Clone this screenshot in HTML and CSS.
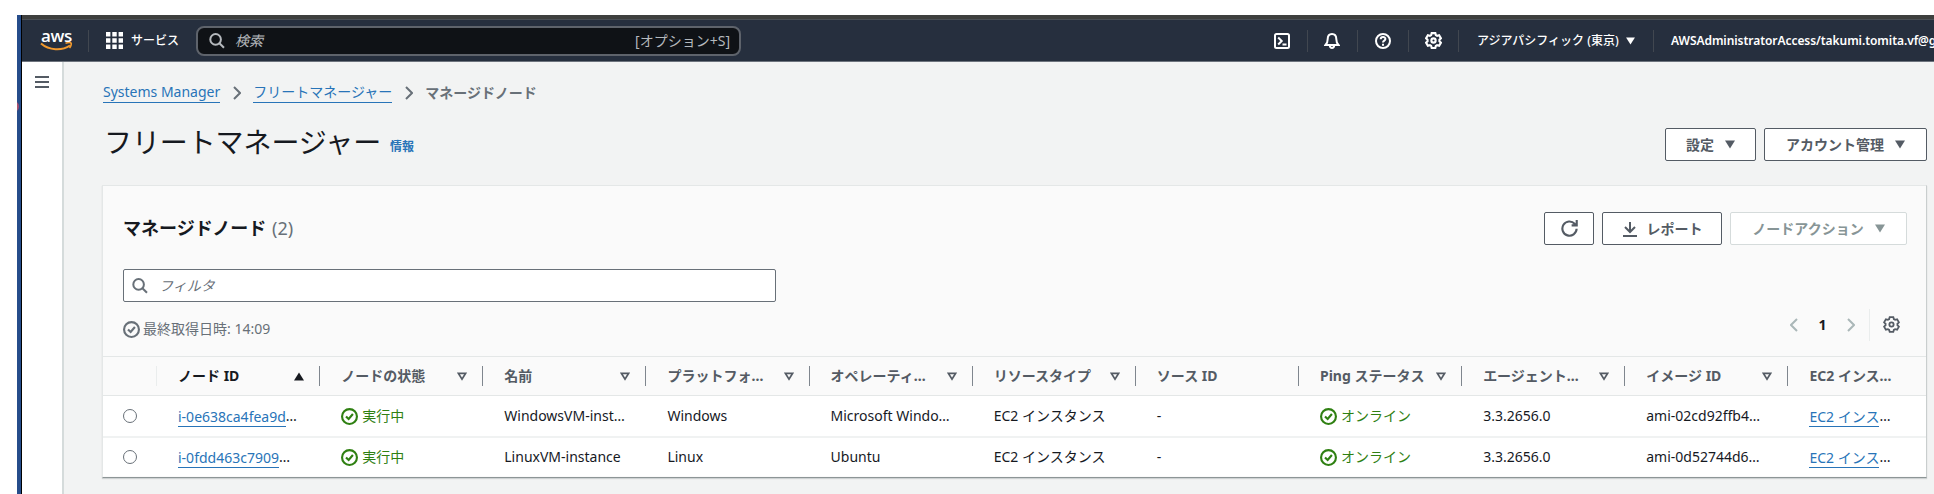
FILE: index.html
```html
<!DOCTYPE html>
<html lang="ja">
<head>
<meta charset="utf-8">
<title>フリートマネージャー</title>
<link rel="stylesheet" href="styles.css">
</head>
<body>
<svg class="defs" width="0" height="0">
  <symbol id="search" viewBox="0 0 16 16"><circle cx="6.6" cy="6.4" r="5.3"/><path d="M10.4 10.2 15 14.8"/></symbol>
  <symbol id="gear" viewBox="0 0 16 16"><path d="M6.3 1h3.4l.5 1.9 1.2.7 1.9-.5 1.7 2.9L13.6 7.300v1.400L15 10l-1.700 2.900-1.900-.5-1.200.7L9.700 15H6.300l-.5-1.900-1.200-.7-1.900.5L1 10l1.400-1.300V7.300L1 6l1.700-2.900 1.900.5 1.200-.7z"/><circle cx="8" cy="8" r="2"/></symbol>
  <symbol id="check" viewBox="0 0 16 16"><circle cx="8" cy="8" r="7"/><path d="m4.700 7.900 2.500 2.500 4-4.700"/></symbol>
  <symbol id="chev" viewBox="0 0 8 14"><path d="m1 1 6 6-6 6"/></symbol>
  <symbol id="down" viewBox="0 0 10 9"><path class="solid" d="M0 .5h10L5 8.500z"/></symbol>
  <symbol id="sort" viewBox="0 0 10 9"><path d="M1.300 1.300h7.400L5 7.200z"/></symbol>
</svg>
<div class="window">
  <div class="edge"><i class="dot"></i></div>
  <div class="app">
    <div class="strip"></div>
    <header class="nav">
      <div class="logo"><span>aws</span><svg width="33" height="10" viewBox="0 0 33 10"><path d="M1 1.500C9 8.500 22 9 30 3.500" stroke="#f29a2e" stroke-width="2" fill="none"/><path d="M25.500 1.300c2.500-.8 5-.8 5.600-.2.500.7-.2 3.300-1.600 5" stroke="#f29a2e" stroke-width="1.600" fill="none"/></svg></div>
      <i class="bar bar-logo"></i>
      <svg class="apps" width="17" height="17" viewBox="0 0 17 17"><path d="M0 0h4.400v4.400H0zM6.300 0h4.400v4.400H6.300zM12.600 0H17v4.400h-4.400zM0 6.300h4.400v4.400H0zM6.300 6.300h4.400v4.400H6.300zM12.600 6.300H17v4.400h-4.400zM0 12.600h4.400V17H0zM6.300 12.600h4.400V17H6.300zM12.600 12.600H17V17h-4.400z"/></svg>
      <span class="services">サービス</span>
      <div class="search"><svg class="ic" width="16" height="16"><use href="#search"/></svg><em>検索</em><span class="key">[オプション+S]</span></div>
      <div class="tools">
        <span class="tool"><svg class="ic" width="16" height="16" viewBox="0 0 16 16"><rect x="1" y="1" width="14" height="14" rx="1.500"/><path d="m4.200 4.500 3.500 3.500-3.500 3.500M8.500 11.500h4"/></svg></span>
        <span class="tool"><svg class="ic" width="16" height="16" viewBox="0 0 16 16"><path d="M1.500 12h13c-1.800-1.700-2.200-3-2.200-6C12.300 3 10.500 1 8 1S3.700 3 3.700 6c0 3-.4 4.300-2.200 6zM5.800 12.500c.2 3.200 4.200 3.200 4.400 0"/></svg></span>
        <span class="tool"><svg class="ic" width="16" height="16" viewBox="0 0 16 16"><circle cx="8" cy="8" r="7"/><path d="M5.700 6.300c0-3 4.700-3 4.700-.2C10.400 7.700 8 7.600 8 9.600M8 10.800v1.900"/></svg></span>
        <span class="tool"><svg class="ic" width="17" height="17"><use href="#gear"/></svg></span>
      </div>
      <span class="region">アジアパシフィック (東京)</span><svg class="caret" width="9" height="8"><use href="#down"/></svg>
      <i class="bar bar-user"></i>
      <span class="user">AWSAdministratorAccess/takumi.tomita.vf@gm</span>
    </header>
    <div class="body">
      <aside class="side"><i></i><i></i><i></i></aside>
      <main class="main">
        <nav class="crumbs"><a class="c1">Systems Manager</a><svg width="8" height="14"><use href="#chev"/></svg><a class="c2">フリートマネージャー</a><svg width="8" height="14"><use href="#chev"/></svg><b>マネージドノード</b></nav>
        <div class="heading">
          <h1>フリートマネージャー</h1><a>情報</a>
          <div class="actions">
            <button class="btn w-set">設定<svg width="10" height="9"><use href="#down"/></svg></button>
            <button class="btn w-acc">アカウント管理<svg width="10" height="9"><use href="#down"/></svg></button>
          </div>
        </div>
        <section class="card">
          <div class="top">
            <h2>マネージドノード</h2><span class="count">(2)</span>
            <div class="actions">
              <button class="btn w-ref"><svg class="ic" width="17" height="17" viewBox="0 0 16 16"><path d="M14.700 8.300A6.700 6.700 0 1 1 12.900 3.500l1.200 1.200M14.800 0v5H10"/></svg></button>
              <button class="btn w-rep"><svg class="ic" width="16" height="16" viewBox="0 0 16 16"><path d="M8 1v9.500M3 6l5 5 5-5M1 15h14"/></svg>レポート</button>
              <button class="btn w-act off">ノードアクション<svg width="10" height="9"><use href="#down"/></svg></button>
            </div>
          </div>
          <div class="filter"><svg class="ic" width="16" height="16"><use href="#search"/></svg><em>フィルタ</em></div>
          <div class="meta">
            <svg class="ic" width="17" height="17"><use href="#check"/></svg><span class="time">最終取得日時: 14:09</span>
            <div class="pager"><svg class="flip" width="8" height="14"><use href="#chev"/></svg><b>1</b><svg width="8" height="14"><use href="#chev"/></svg><i></i><svg class="ic gear" width="17" height="17"><use href="#gear"/></svg></div>
          </div>
          <div class="row head">
            <div class="pick"></div>
            <div class="cell active"><span>ノード ID</span><svg width="10" height="9"><path class="solid" d="M0 8.500h10L5 .5z"/></svg></div>
            <div class="cell"><span>ノードの状態</span><svg width="10" height="9"><use href="#sort"/></svg></div>
            <div class="cell"><span>名前</span><svg width="10" height="9"><use href="#sort"/></svg></div>
            <div class="cell"><span>プラットフォ…</span><svg width="10" height="9"><use href="#sort"/></svg></div>
            <div class="cell"><span>オペレーティ…</span><svg width="10" height="9"><use href="#sort"/></svg></div>
            <div class="cell"><span>リソースタイプ</span><svg width="10" height="9"><use href="#sort"/></svg></div>
            <div class="cell"><span>ソース ID</span></div>
            <div class="cell"><span>Ping ステータス</span><svg width="10" height="9"><use href="#sort"/></svg></div>
            <div class="cell"><span>エージェント…</span><svg width="10" height="9"><use href="#sort"/></svg></div>
            <div class="cell"><span>イメージ ID</span><svg width="10" height="9"><use href="#sort"/></svg></div>
            <div class="cell last"><span>EC2 インス…</span></div>
          </div>
          <div class="row">
            <div class="pick"><i></i></div>
            <div class="cell"><a>i-0e638ca4fea9d</a>…</div>
            <div class="cell ok"><svg class="ic" width="17" height="17"><use href="#check"/></svg>実行中</div>
            <div class="cell">WindowsVM-inst…</div>
            <div class="cell">Windows</div>
            <div class="cell">Microsoft Windo…</div>
            <div class="cell">EC2 インスタンス</div>
            <div class="cell">-</div>
            <div class="cell ok"><svg class="ic" width="17" height="17"><use href="#check"/></svg>オンライン</div>
            <div class="cell">3.3.2656.0</div>
            <div class="cell">ami-02cd92ffb4…</div>
            <div class="cell last"><a>EC2 インス</a>…</div>
          </div>
          <div class="row">
            <div class="pick"><i></i></div>
            <div class="cell"><a>i-0fdd463c7909</a>…</div>
            <div class="cell ok"><svg class="ic" width="17" height="17"><use href="#check"/></svg>実行中</div>
            <div class="cell">LinuxVM-instance</div>
            <div class="cell">Linux</div>
            <div class="cell">Ubuntu</div>
            <div class="cell">EC2 インスタンス</div>
            <div class="cell">-</div>
            <div class="cell ok"><svg class="ic" width="17" height="17"><use href="#check"/></svg>オンライン</div>
            <div class="cell">3.3.2656.0</div>
            <div class="cell">ami-0d52744d6…</div>
            <div class="cell last"><a>EC2 インス</a>…</div>
          </div>
        </section>
      </main>
    </div>
  </div>
</div>
</body>
</html>
```
FILE: styles.css
```css
* { box-sizing: border-box; }
html, body { margin: 0; height: 494px; overflow: hidden; background: #fff; }
body { font: 14px/20px "Noto Sans", "Noto Sans CJK JP", sans-serif; color: #16191f; white-space: nowrap; }
.defs { position: absolute; }
svg { flex: none; fill: none; stroke: currentColor; stroke-width: 2; display: block; }
svg .solid { fill: currentColor; stroke: none; }
i { flex: none; }

.window { display: flex; height: 494px; padding: 15px 0 0 17px; }
.edge { flex: none; width: 5px; background: #264d8b; border-right: 1px solid #000; overflow: hidden; padding-top: 86px; }
.dot { display: block; width: 11px; height: 11px; margin-left: -9px; border-radius: 50%; background: #a8506f; }
.app { flex: 1; min-width: 0; display: flex; flex-direction: column; }
.strip { height: 5px; background: #3e3f3e; border-bottom: 1px solid #4a4f55; }

.nav { height: 42px; flex: none; background: #262f3e; border-bottom: 1px solid #6d737d; color: #fff; display: flex; align-items: center; overflow: hidden; }
.logo { width: 33px; margin-left: 18px; flex: none; display: flex; flex-direction: column; align-items: center; }
.logo span { font: 600 17px/14px "Open Sans", sans-serif; height: 13px; letter-spacing: -.3px; }
.bar { width: 1px; height: 22px; background: #414750; }
.bar-logo { margin-left: 15px; }
.apps { margin-left: 17px; fill: #fff; stroke: none; }
.services { font-size: 12px; font-weight: 500; width: 49px; margin-left: 8px; flex: none; }
.search { flex: none; width: 545px; height: 30px; margin-left: 16px; border: 2px solid #5e636b; border-radius: 8px; background: #0f1216; color: #b5b9bd; display: flex; align-items: center; padding: 0 9px 0 11px; }
.search em { margin-left: 10px; }
.key { margin-left: auto; }
.tools { display: flex; margin-left: 516px; flex: none; }
.tool { width: 50.500px; height: 22px; border-right: 1px solid #414750; display: flex; align-items: center; justify-content: center; }
.region { margin-left: 18px; font-size: 12px; font-weight: 500; width: 144px; flex: none; }
.caret { margin-left: 5px; }
.bar-user { margin-left: 18px; }
.user { margin-left: 17px; font-size: 12px; font-weight: 600; letter-spacing: -.06px; }

.body { flex: 1; display: flex; min-height: 0; }
.side { flex: none; width: 42px; border-right: 2px solid #d5dbdb; padding: 14px 0 0 13px; display: flex; flex-direction: column; gap: 3px; }
.side i { width: 14px; height: 2px; background: #545b64; }
.main { flex: 1; min-width: 0; background: #f2f3f3; padding: 20px 7px 0 38px; }

a { color: #2874b8; }
.crumbs { height: 21px; display: flex; align-items: center; color: #687078; margin-left: 1px; }
.crumbs a { border-bottom: 1px solid #2874b8; height: 21px; }
.crumbs svg { margin: 0 12px 0 13px; }
.crumbs b { font-weight: 600; }
.heading { display: flex; margin: 25px 0; height: 32px; }
h1 { margin: -4px 0 0 2px; width: 286px; font-size: 28px; line-height: 36px; font-weight: 400; letter-spacing: -.1px; }
.heading a { font-size: 12px; font-weight: 700; line-height: 38px; }
.actions { margin-left: auto; display: flex; gap: 8px; }
.btn { height: 33px; flex: none; display: flex; align-items: center; justify-content: center; padding: 0; font: 700 14px/20px "Noto Sans", "Noto Sans CJK JP", sans-serif; color: #545b64; background: #fff; border: 1px solid #545b64; border-radius: 2px; gap: 11px; }
.btn.off { color: #879596; border-color: #d5dbdb; }
.w-set { width: 91px; }
.w-acc { width: 163px; }
.w-ref { width: 50px; }
.w-rep { width: 120px; gap: 9px; }
.w-act { width: 177px; }

.card { height: 293px; background: #fafafa; border: 1px solid #e4e7e7; border-bottom: 1px solid #8d9596; border-right-color: #c9cece; box-shadow: 0 1px 1px rgba(0,28,36,.15); }
.top { display: flex; padding: 26px 19px 0 20px; height: 59px; }
h2 { margin: 4px 0 0; font-size: 18px; line-height: 24px; font-weight: 700; width: 149px; }
.count { font-size: 18px; line-height: 24px; margin-top: 4px; color: #687078; }
.filter { margin: 24px 0 0 20px; width: 653px; height: 33px; border: 1px solid #687078; border-radius: 2px; background: #fff; display: flex; align-items: center; padding-left: 8px; color: #687078; }
.filter em { margin-left: 11px; color: #687078; }
.meta { height: 54px; display: flex; align-items: center; padding: 0 26px 0 20px; color: #687078; }
.time { margin-left: 3px; }
.pager { margin: -9px 0 0 auto; display: flex; align-items: center; color: #aab7b8; }
.flip { transform: scaleX(-1); }
.pager b { color: #16191f; width: 49px; text-align: center; }
.pager i { width: 1px; height: 32px; background: #eaeded; margin: 0 13px 0 14px; }
.gear { color: #545b64; stroke-width: 1.700; }

.row { display: flex; height: 40px; background: #fff; border-top: 2px solid #f0f2f2; }
.head { background: #fafafa; height: 39px; border-top: 1px solid #e4e7e7; font-weight: 700; color: #545b64; }
.head + .row { height: 41px; border-top: 1px solid #e4e7e7; }
.pick { width: 54px; flex: none; display: flex; align-items: center; padding-left: 20px; }
.pick i { width: 14px; height: 14px; border: 1px solid #687078; border-radius: 50%; background: #fff; }
.head .pick { border-right: 1px solid #eaeded; height: 20px; margin-top: 9px; }
.cell { flex: none; width: 163.150px; display: flex; align-items: center; padding: 0 15px 0 21px; }
.cell a { border-bottom: 1px solid #2874b8; height: 21px; line-height: 21px; }
.head .cell { height: 20px; margin-top: 9px; border-right: 1px solid #7f868e; }
.head .cell svg { margin-left: auto; stroke-width: 1.700; }
.head .active { color: #16191f; }
.cell.last, .head .cell.last { border-right: 0; padding-right: 0; width: 138px; }
.ok { color: #2f8012; }
.ok svg { margin-right: 4px; }
```
